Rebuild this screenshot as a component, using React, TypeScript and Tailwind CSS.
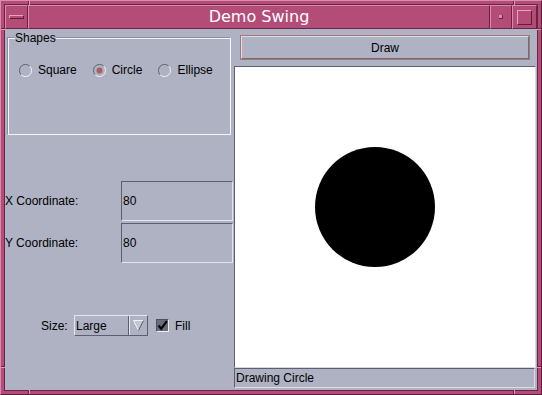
import React from "react";

const panel = "bg-[#aeb2c3]";

function Radio({ label, checked }: { label: string; checked?: boolean }) {
  return (
    <div className="flex items-center gap-[6px]">
      <svg width="13" height="13" viewBox="0 0 13 13">
        <path d="M10.8 2.2 A6 6 0 0 0 2.2 10.8" fill="none" stroke="#5f6273" strokeWidth="1" />
        <path d="M2.2 10.8 A6 6 0 0 0 10.8 2.2" fill="none" stroke="#f2f3f7" strokeWidth="1" />
        {checked && <circle cx="6.5" cy="6.5" r="3" fill="#a8605e" />}
      </svg>
      <span>{label}</span>
    </div>
  );
}

function CoordRow({ label, value, className }: { label: string; value: string; className?: string }) {
  return (
    <div className={`flex items-center ${className ?? ""}`}>
      <span className="w-[116px]">{label}</span>
      <div className="w-[112px] h-[40px] flex items-center pl-[1px] border border-t-[#5c5f70] border-l-[#5c5f70] border-r-[#e4e6ed] border-b-[#e4e6ed]">
        {value}
      </div>
    </div>
  );
}

export default function App() {
  return (
    <div className="relative w-[542px] h-[395px] bg-[#b34d78] border border-t-[#d98bae] border-l-[#d98bae] border-r-[#5e1d3b] border-b-[#5e1d3b] p-[3px] font-['Liberation_Sans',Arial,sans-serif] text-[12px] text-black">
      {/* frame resize ticks */}
      <div className="absolute top-0 left-[27px] w-[1px] h-[4px] bg-[#6b2446]" />
      <div className="absolute top-0 left-[28px] w-[1px] h-[4px] bg-[#e09ab9]" />
      <div className="absolute top-0 left-[512px] w-[1px] h-[4px] bg-[#6b2446]" />
      <div className="absolute top-0 left-[513px] w-[1px] h-[4px] bg-[#e09ab9]" />
      <div className="absolute bottom-0 left-[27px] w-[1px] h-[4px] bg-[#6b2446]" />
      <div className="absolute bottom-0 left-[28px] w-[1px] h-[4px] bg-[#e09ab9]" />
      <div className="absolute bottom-0 left-[512px] w-[1px] h-[4px] bg-[#6b2446]" />
      <div className="absolute bottom-0 left-[513px] w-[1px] h-[4px] bg-[#e09ab9]" />
      <div className="absolute left-0 top-[27px] w-[4px] h-[1px] bg-[#6b2446]" />
      <div className="absolute left-0 top-[28px] w-[4px] h-[1px] bg-[#e09ab9]" />
      <div className="absolute right-0 top-[27px] w-[4px] h-[1px] bg-[#6b2446]" />
      <div className="absolute right-0 top-[28px] w-[4px] h-[1px] bg-[#e09ab9]" />
      <div className="absolute left-0 top-[365px] w-[4px] h-[1px] bg-[#6b2446]" />
      <div className="absolute left-0 top-[366px] w-[4px] h-[1px] bg-[#e09ab9]" />
      <div className="absolute right-0 top-[365px] w-[4px] h-[1px] bg-[#6b2446]" />
      <div className="absolute right-0 top-[366px] w-[4px] h-[1px] bg-[#e09ab9]" />

      <div className="h-full flex flex-col border border-[#6b2446]">
        {/* Title bar */}
        <div className="flex h-[24px] shrink-0">
          <div className="w-[23px] flex items-center justify-center border border-t-[#d98bae] border-l-[#d98bae] border-r-[#6b2446] border-b-[#6b2446]">
            <div className="w-[15px] h-[4px] border border-t-[#e5a3c0] border-l-[#e5a3c0] border-r-[#5e1d3b] border-b-[#5e1d3b]" />
          </div>
          <div className="flex-1 flex items-center justify-center border border-t-[#d98bae] border-l-[#d98bae] border-r-[#6b2446] border-b-[#6b2446] font-['DejaVu_Sans',sans-serif] text-[16px] text-white">
            Demo Swing
          </div>
          <div className="w-[22px] flex items-center justify-center border border-t-[#d98bae] border-l-[#d98bae] border-r-[#6b2446] border-b-[#6b2446]">
            <div className="w-[4px] h-[4px] bg-[#d98bae] border-r border-b border-[#6b2446]" />
          </div>
          <div className="w-[25px] flex items-center justify-center border border-t-[#d98bae] border-l-[#d98bae] border-r-[#6b2446] border-b-[#6b2446]">
            <div className="w-[15px] h-[15px] border border-t-[#e5a3c0] border-l-[#e5a3c0] border-r-[#5e1d3b] border-b-[#5e1d3b]" />
          </div>
        </div>

        {/* Content */}
        <div className={`flex flex-1 ${panel}`}>
          {/* Left panel */}
          <div className="w-[229px] shrink-0 flex flex-col">
            <div className="relative ml-[3px] mt-[9px] w-[223px] h-[97px] border border-[#f4f5f8] shadow-[-1px_-1px_0_#8a8d9e]">
              <span className={`absolute left-[6px] top-[-8px] leading-[14px] ${panel}`}>Shapes</span>
              <div className="flex gap-[16px] pl-[10px] pt-[22px]">
                <Radio label="Square" />
                <Radio label="Circle" checked />
                <Radio label="Ellipse" />
              </div>
            </div>

            <CoordRow label="X Coordinate:" value="80" className="mt-[46px]" />
            <CoordRow label="Y Coordinate:" value="80" className="mt-[2px]" />

            <div className="flex items-center mt-[52px] pl-[36px]">
              <span className="w-[33px]">Size:</span>
              <div className="flex w-[74px] h-[21px] border border-t-[#e4e6ed] border-l-[#e4e6ed] border-r-[#5c5f70] border-b-[#5c5f70]">
                <div className="flex-1 flex items-center pl-[1px]">Large</div>
                <div className="w-[19px] flex items-center justify-center border-l border-l-[#5c5f70] shadow-[inset_1px_0_0_#e4e6ed]">
                  <svg width="11" height="11" viewBox="0 0 11 11">
                    <polygon points="0.5,0.5 10.5,0.5 5.5,10.5" fill="#c3c6d3" />
                    <path d="M0.5 0.5 L10.5 0.5 M0.5 0.5 L5.5 10.5" stroke="#f0f1f5" strokeWidth="1" fill="none" />
                    <path d="M10.5 0.5 L5.5 10.5" stroke="#5c5f70" strokeWidth="1" fill="none" />
                  </svg>
                </div>
              </div>
              <div className="ml-[8px] w-[13px] h-[13px] bg-[#6a6d7a] border border-t-[#4e5060] border-l-[#4e5060] border-r-[#eceef3] border-b-[#eceef3] flex items-center justify-center">
                <svg width="11" height="11" viewBox="0 0 11 11">
                  <path d="M1.5 5.5 L4.2 8.8 L9.8 1.2" stroke="#000" strokeWidth="2.2" fill="none" />
                </svg>
              </div>
              <span className="ml-[6px]">Fill</span>
            </div>
          </div>

          {/* Right panel */}
          <div className="flex-1 flex flex-col pt-[6px] pb-[2px]">
            <div className="ml-[6px] mr-[7px] h-[25px] border border-[#a87474] shrink-0">
              <div className="h-full flex items-center justify-center border border-t-[#dcdee7] border-l-[#dcdee7] border-r-[#6b6e80] border-b-[#6b6e80]">
                Draw
              </div>
            </div>
            <div className="relative mt-[6px] mr-[1px] h-[302px] bg-white border border-t-[#5c5f70] border-l-[#5c5f70] border-r-[#d6d8e1] border-b-[#d6d8e1] shrink-0">
              <svg className="absolute left-[80px] top-[80px]" width="120" height="120" viewBox="0 0 120 120">
                <circle cx="60" cy="60" r="60" fill="#000" />
              </svg>
            </div>
            <div className="mr-[2px] h-[20px] flex items-center pl-[1px] border border-t-[#5c5f70] border-l-[#5c5f70] border-r-[#dcdee7] border-b-[#dcdee7] shrink-0">
              Drawing Circle
            </div>
          </div>
        </div>
      </div>
    </div>
  );
}
